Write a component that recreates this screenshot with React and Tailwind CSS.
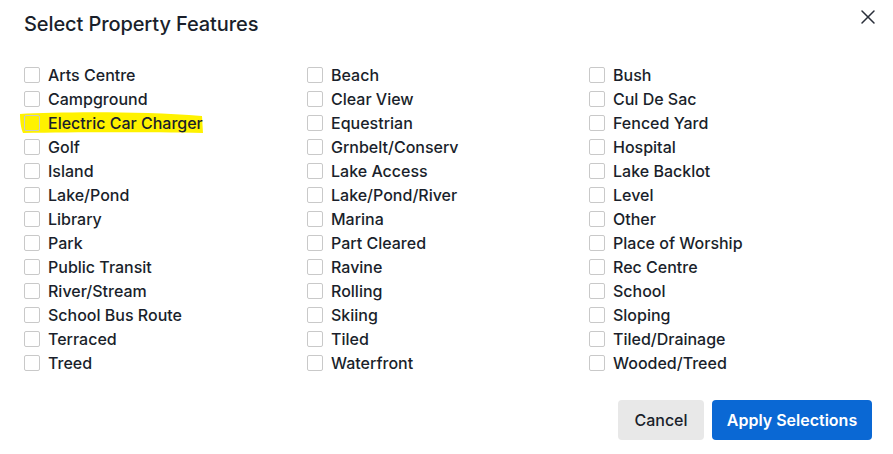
import { X } from 'lucide-react';

const columns = [
  ['Arts Centre', 'Campground', 'Electric Car Charger', 'Golf', 'Island', 'Lake/Pond', 'Library', 'Park', 'Public Transit', 'River/Stream', 'School Bus Route', 'Terraced', 'Treed'],
  ['Beach', 'Clear View', 'Equestrian', 'Grnbelt/Conserv', 'Lake Access', 'Lake/Pond/River', 'Marina', 'Part Cleared', 'Ravine', 'Rolling', 'Skiing', 'Tiled', 'Waterfront'],
  ['Bush', 'Cul De Sac', 'Fenced Yard', 'Hospital', 'Lake Backlot', 'Level', 'Other', 'Place of Worship', 'Rec Centre', 'School', 'Sloping', 'Tiled/Drainage', 'Wooded/Treed'],
];

// hand-drawn marker stroke over one item
const Highlight = () => (
  <svg
    className="absolute left-[-6px] top-0 z-0 pointer-events-none"
    width="188"
    height="24"
    viewBox="0 0 188 24"
  >
    <path
      d="M2 3 C40 1 120 0 184 5 L185 22 C130 21 60 21 5 22 C3 18 2 10 2 3 Z"
      fill="#fff200"
    />
  </svg>
);

const App = () => {
  return (
    <div className="w-[893px] h-[454px] bg-white relative font-['Inter',sans-serif] text-[#1a1f2b]">
      <button className="absolute right-[13px] top-[5px] text-[#2a2f3a]">
        <X size={24} strokeWidth={1.5} />
      </button>

      <div className="pl-6 pr-[21px] pt-[10px]">
        <h2 className="text-[20px] leading-7 font-medium tracking-[-0.1px]">Select Property Features</h2>

        <div className="mt-[25px] grid grid-cols-[283px_282px_1fr]">
          {columns.map((col, ci) => (
            <div key={ci} className="flex flex-col">
              {col.map((item) => (
                <label key={item} className="relative flex items-center h-6 gap-2">
                  {item === 'Electric Car Charger' && <Highlight />}
                  <span className="relative z-10 w-4 h-4 rounded-[2px] border border-[#c9c9c9] shrink-0" />
                  <span className="relative z-10 text-[16px] leading-6 font-[450]">{item}</span>
                </label>
              ))}
            </div>
          ))}
        </div>

        <div className="mt-[25px] flex justify-end gap-2">
          <button className="h-10 w-[86px] rounded bg-[#e8e8e8] text-[16px] font-medium text-[#1a1f2b]">
            Cancel
          </button>
          <button className="h-10 w-[160px] rounded bg-[#0a68d4] text-[16px] font-semibold text-white">
            Apply Selections
          </button>
        </div>
      </div>
    </div>
  );
};

export default App;
